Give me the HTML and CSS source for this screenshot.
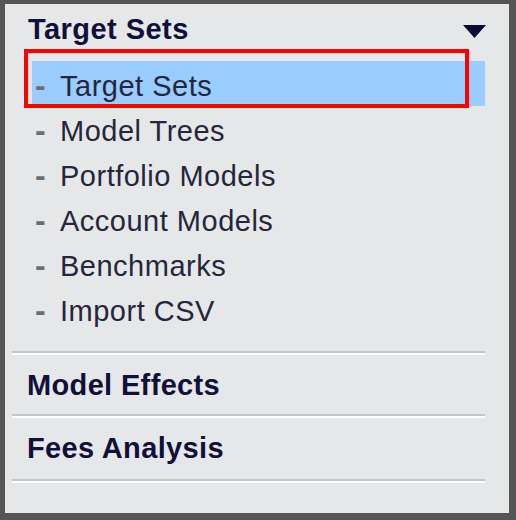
FILE: index.html
```html
<!DOCTYPE html>
<html>
<head>
<meta charset="utf-8">
<link rel="stylesheet" href="styles.css">
</head>
<body>
<div class="panel">
  <div class="head">
    <span class="head-title">Target Sets</span>
    <svg class="caret" width="23" height="13" viewBox="0 0 23 13"><path d="M0 0 H23 L11.5 13 Z" fill="#0b0b36"/></svg>
  </div>
  <ul class="items">
    <li class="item active"><span class="dash">-</span>Target Sets</li>
    <li class="item"><span class="dash">-</span>Model Trees</li>
    <li class="item"><span class="dash">-</span>Portfolio Models</li>
    <li class="item"><span class="dash">-</span>Account Models</li>
    <li class="item"><span class="dash">-</span>Benchmarks</li>
    <li class="item"><span class="dash">-</span>Import CSV</li>
  </ul>
  <div class="sections">
    <div class="sep"></div>
    <div class="section first">Model Effects</div>
    <div class="sep"></div>
    <div class="section second">Fees Analysis</div>
    <div class="sep"></div>
  </div>
  <div class="highlight-box"></div>
</div>
</body>
</html>
```

FILE: styles.css
```css
html, body {
  margin: 0;
  padding: 0;
  background: #ffffff;
}

.panel {
  position: relative;
  width: 516px;
  height: 520px;
  box-sizing: border-box;
  border-style: solid;
  border-color: #555555;
  border-width: 4px 7px 7px 5px;
  background: #e6e7e9;
  font-family: "Liberation Sans", Arial, sans-serif;
  font-size: 29px;
}

.head {
  display: flex;
  align-items: center;
  justify-content: space-between;
  margin: 3px 23px 9px 23px;
  height: 45px;
  line-height: 45px;
}

.head-title {
  font-weight: bold;
  color: #10103a;
  letter-spacing: 0.45px;
}

.caret {
  display: block;
  margin-top: 3px;
}

.items {
  list-style: none;
  margin: 0 24px 0 27px;
  padding: 0;
}

.item {
  height: 45px;
  box-sizing: border-box;
  padding-top: 3px;
  padding-left: 3px;
  line-height: 42px;
  color: #26263a;
  white-space: nowrap;
  letter-spacing: 0.5px;
}

.item.active {
  background: #99ccff;
}

.dash {
  display: inline-block;
  width: 25px;
  font-weight: bold;
  font-size: 32px;
  color: #6a6f76;
  letter-spacing: 0;
}

.sections {
  margin: 20px 24px 0 7px;
}

.sep {
  height: 2px;
  background: #c4c5c7;
  border-bottom: 2px solid #ffffff;
}

.section {
  font-weight: bold;
  color: #10103a;
  line-height: 45px;
  padding-left: 15px;
  padding-top: 8px;
  letter-spacing: 0.35px;
}

.section.first {
  padding-bottom: 6px;
}

.section.second {
  padding-bottom: 8px;
}

.highlight-box {
  position: absolute;
  left: 19px;
  top: 45px;
  width: 445px;
  height: 59px;
  box-sizing: border-box;
  border: 4px solid #ff0000;
}
```
